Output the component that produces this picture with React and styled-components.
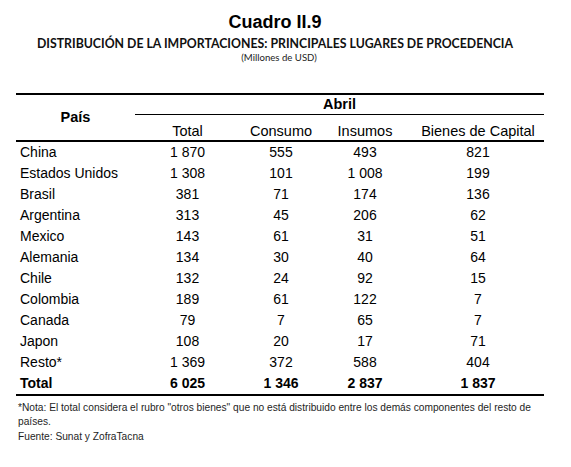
import React from 'react';
import styled, { createGlobalStyle } from 'styled-components';

const GlobalStyle = createGlobalStyle`
  body {
    margin: 0;
    background: #fff;
    color: #000;
    font-family: "Liberation Sans", Arial, sans-serif;
  }
`;

const Page = styled.div`
  width: 571px;
  height: 467px;
  padding-top: 12px;
  box-sizing: border-box;
  overflow: hidden;
`;

const Heading = styled.header`
  display: flex;
  flex-direction: column;
  align-items: center;
  padding-right: 21px;
`;

const Title = styled.h1`
  margin: 0;
  font-size: 18px;
  line-height: 20px;
  font-weight: 700;
`;

const Subtitle = styled.h2`
  margin: 5px 0 0;
  font-family: Lato, "Open Sans", sans-serif;
  font-size: 12.3px;
  line-height: 14px;
  font-weight: 700;
  color: #111;
`;

const Units = styled.div`
  margin-top: 1px;
  padding-left: 8px;
  font-family: Lato, "Open Sans", sans-serif;
  font-size: 9.6px;
  line-height: 12px;
  color: #222;
`;

const Table = styled.div`
  margin: 29px 0 0 16px;
  width: 528px;
  border-top: 2px solid #000;
  border-bottom: 2px solid #000;
`;

const cols = '119px 105px 82px 86px 136px';

const HeadGrid = styled.div`
  display: grid;
  grid-template-columns: ${cols};
  grid-template-rows: 20px 25px;
  border-bottom: 2px solid #000;
`;

const CountryHead = styled.div`
  grid-row: 1 / 3;
  grid-column: 1;
  display: flex;
  align-items: center;
  justify-content: center;
  padding-bottom: 1px;
  font-size: 14.5px;
  font-weight: 700;
`;

const MonthHead = styled.div`
  grid-row: 1;
  grid-column: 2 / 6;
  text-align: center;
  font-size: 14.5px;
  font-weight: 700;
  line-height: 19px;
  border-bottom: 1px solid #000;
`;

const ColHead = styled.div`
  grid-row: 2;
  text-align: center;
  padding-top: 8px;
  padding-left: ${p => (p.$shift ? `${p.$shift}px` : '0')};
  font-size: 14.5px;
  line-height: 17px;
`;

const Row = styled.div`
  display: grid;
  grid-template-columns: ${cols};
  height: 21px;
  line-height: 21px;
  font-size: 14px;
  font-weight: ${p => (p.$total ? 700 : 400)};
`;

const Name = styled.div`
  padding-left: 4px;
`;

const Num = styled.div`
  text-align: center;
  padding-left: ${p => (p.$shift ? `${p.$shift}px` : '0')};
`;

const Notes = styled.div`
  margin: 5px 0 0 18px;
  width: 540px;
  font-size: 10.2px;
  line-height: 14px;
  color: #1e1e1e;

  p {
    margin: 0;
  }

  p + p {
    margin-top: 1px;
  }
`;

const rows = [
  ['China', '1 870', '555', '493', '821'],
  ['Estados Unidos', '1 308', '101', '1 008', '199'],
  ['Brasil', '381', '71', '174', '136'],
  ['Argentina', '313', '45', '206', '62'],
  ['Mexico', '143', '61', '31', '51'],
  ['Alemania', '134', '30', '40', '64'],
  ['Chile', '132', '24', '92', '15'],
  ['Colombia', '189', '61', '122', '7'],
  ['Canada', '79', '7', '65', '7'],
  ['Japon', '108', '20', '17', '71'],
  ['Resto*', '1 369', '372', '588', '404'],
];

const total = ['Total', '6 025', '1 346', '2 837', '1 837'];

const DataRow = ({ cells, isTotal }) => (
  <Row $total={isTotal}>
    <Name>{cells[0]}</Name>
    <Num>{cells[1]}</Num>
    <Num>{cells[2]}</Num>
    <Num>{cells[3]}</Num>
    <Num $shift={4}>{cells[4]}</Num>
  </Row>
);

export default function App() {
  return (
    <Page>
      <GlobalStyle />
      <Heading>
        <Title>Cuadro II.9</Title>
        <Subtitle>DISTRIBUCIÓN DE LA IMPORTACIONES: PRINCIPALES LUGARES DE PROCEDENCIA</Subtitle>
        <Units>(Millones de USD)</Units>
      </Heading>

      <Table>
        <HeadGrid>
          <CountryHead>País</CountryHead>
          <MonthHead>Abril</MonthHead>
          <ColHead>Total</ColHead>
          <ColHead>Consumo</ColHead>
          <ColHead>Insumos</ColHead>
          <ColHead $shift={4}>Bienes de Capital</ColHead>
        </HeadGrid>
        {rows.map(r => (
          <DataRow key={r[0]} cells={r} />
        ))}
        <DataRow cells={total} isTotal />
      </Table>

      <Notes>
        <p>
          *Nota: El total considera el rubro "otros bienes" que no está distribuido entre los demás componentes del resto
          de países.
        </p>
        <p>Fuente: Sunat y ZofraTacna</p>
      </Notes>
    </Page>
  );
}
